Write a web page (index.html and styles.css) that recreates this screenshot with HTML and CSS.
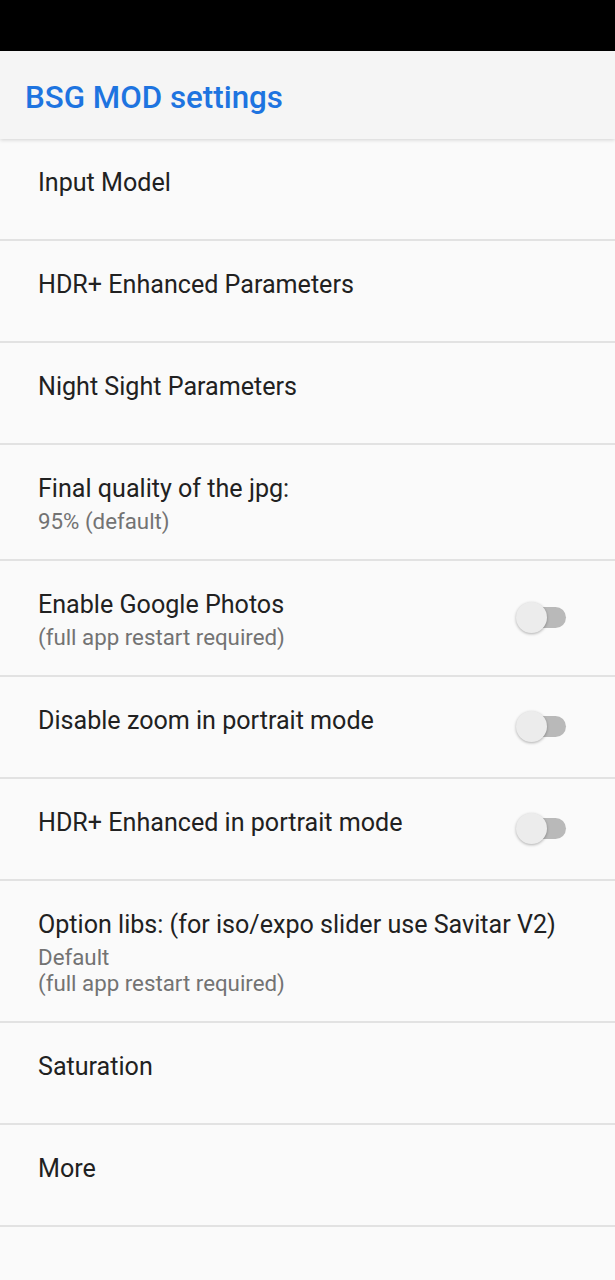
FILE: index.html
```html
<!DOCTYPE html>
<html lang="en">
<head>
  <meta charset="UTF-8" />
  <title>BSG MOD settings</title>
  <link rel="stylesheet" href="styles.css">
</head>
<body>
  <div class="status-bar"></div>

  <header class="toolbar">
    <h1>BSG MOD settings</h1>
  </header>

  <div class="pref-list">
    <div class="pref">
      <div class="pref-text">
        <div class="pref-title">Input Model</div>
      </div>
    </div>

    <div class="pref">
      <div class="pref-text">
        <div class="pref-title">HDR+ Enhanced Parameters</div>
      </div>
    </div>

    <div class="pref">
      <div class="pref-text">
        <div class="pref-title">Night Sight Parameters</div>
      </div>
    </div>

    <div class="pref">
      <div class="pref-text">
        <div class="pref-title">Final quality of the jpg:</div>
        <div class="pref-summary">95% (default)</div>
      </div>
    </div>

    <div class="pref">
      <div class="pref-text">
        <div class="pref-title">Enable Google Photos</div>
        <div class="pref-summary">(full app restart required)</div>
      </div>
      <div class="switch"></div>
    </div>

    <div class="pref">
      <div class="pref-text">
        <div class="pref-title">Disable zoom in portrait mode</div>
      </div>
      <div class="switch"></div>
    </div>

    <div class="pref">
      <div class="pref-text">
        <div class="pref-title">HDR+ Enhanced in portrait mode</div>
      </div>
      <div class="switch"></div>
    </div>

    <div class="pref">
      <div class="pref-text">
        <div class="pref-title">Option libs: (for iso/expo slider use Savitar V2)</div>
        <div class="pref-summary">Default<br>(full app restart required)</div>
      </div>
    </div>

    <div class="pref">
      <div class="pref-text">
        <div class="pref-title">Saturation</div>
      </div>
    </div>

    <div class="pref">
      <div class="pref-text">
        <div class="pref-title">More</div>
      </div>
    </div>
  </div>
</body>
</html>
```

FILE: styles.css
```css
body {
  font-family: Roboto, "Noto Sans", sans-serif;
  background: #fafafa;
  margin: 0;
}

.status-bar {
  height: 51px;
  background: #000;
}

.toolbar {
  position: relative;
  z-index: 1;
  height: 88px;
  background: #f5f5f5;
  display: flex;
  align-items: center;
  padding: 4px 0 0 25px;
  box-sizing: border-box;
  box-shadow: 0 1px 4px rgba(0, 0, 0, 0.16);
}

.toolbar h1 {
  margin: 0;
  font-size: 31.3px;
  font-weight: 500;
  color: #1e74e0;
}

.pref {
  display: flex;
  align-items: flex-start;
  min-height: 102px;
  padding: 29px 49px 25px 38px;
  box-sizing: border-box;
  border-bottom: 2px solid #e2e2e2;
}

.pref-text {
  flex: 1;
}

.pref-title {
  font-size: 25.1px;
  line-height: 30px;
  color: #212121;
}

.pref-summary {
  margin-top: 4px;
  font-size: 22.3px;
  line-height: 26px;
  color: #737373;
}

/* off-state switch, thumb sits over the track */
.switch {
  position: relative;
  align-self: center;
  width: 50px;
  height: 31px;
  margin-top: -5px;
  flex-shrink: 0;
}

.switch::before {
  content: "";
  position: absolute;
  left: 4px;
  right: 0;
  top: 5px;
  height: 21px;
  border-radius: 11px;
  background: #b9b9b9;
}

.switch::after {
  content: "";
  position: absolute;
  left: 0;
  top: 0;
  width: 31px;
  height: 31px;
  border-radius: 50%;
  background: #ececec;
  box-shadow: 0 1px 3px rgba(0, 0, 0, 0.3);
}
```
